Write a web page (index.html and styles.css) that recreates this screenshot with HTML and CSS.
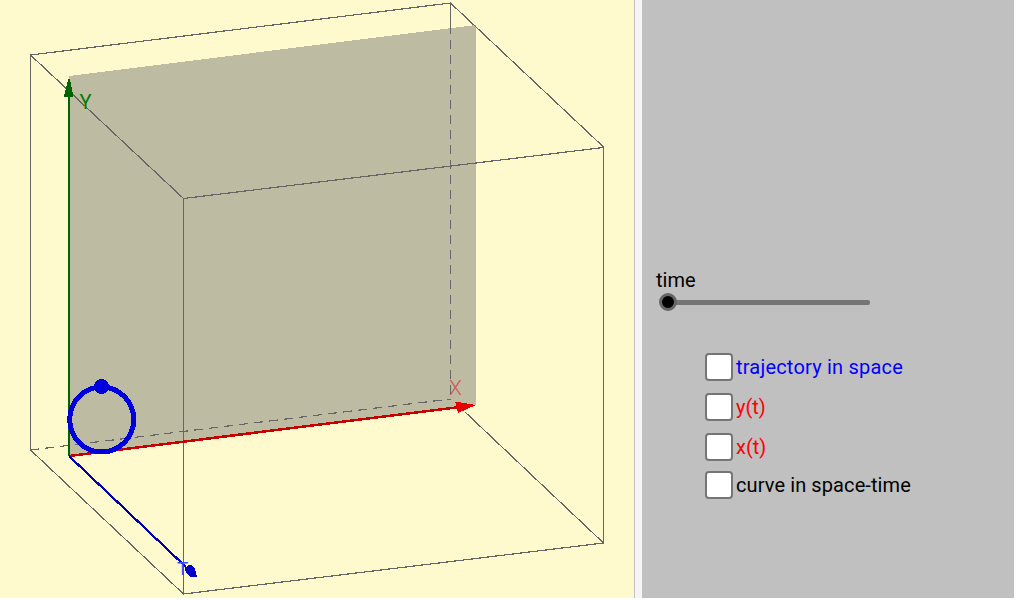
FILE: index.html
```html
<!DOCTYPE html>
<html lang="en">
<head>
<meta charset="utf-8">
<title>Trajectory</title>
<link rel="stylesheet" href="styles.css">
</head>
<body>
<div class="app">
  <div class="view">
    <svg class="scene" width="634" height="598" viewBox="0 0 634 598">
      <polygon class="plane" points="69,76 476,25 476,405 69,456"/>
      <g class="edge">
        <polyline points="450.5,25 450.5,3 30.5,55 30.5,450"/>
        <line x1="30.5" y1="55" x2="183.5" y2="198.500"/>
        <line x1="450.5" y1="3" x2="603.5" y2="147"/>
        <polygon points="183.5,198.500 603.5,147.500 603.5,543 183.5,594"/>
        <line x1="30.5" y1="450" x2="183.5" y2="594"/>
        <line x1="465" y1="412" x2="603.5" y2="543"/>
      </g>
      <g class="edge dashed">
        <line x1="450.5" y1="25" x2="450.5" y2="399"/>
        <line x1="30.5" y1="450" x2="450.5" y2="399"/>
      </g>
      <line class="axis-x" x1="69" y1="456" x2="460" y2="407"/>
      <polygon class="fill-x" points="455,401.500 476,405 458,413"/>
      <text class="label label-x" x="449" y="395">X</text>
      <line class="axis-y" x1="69" y1="456" x2="69" y2="92"/>
      <polygon class="fill-y" points="69,77 71,84 73.500,96.500 64,96.500 67,84"/>
      <text class="label label-y" x="79.500" y="109">Y</text>
      <line class="axis-t" x1="69" y1="456" x2="186" y2="567"/>
      <polygon class="fill-t" points="197,577 190,577 186,573 185,568 188,565 192,565 195,569"/>
      <text class="label label-t" x="177" y="575">T</text>
      <ellipse class="orbit" cx="101.700" cy="419.500" rx="32" ry="32.500"/>
      <circle class="point" cx="101.500" cy="386.500" r="7.500"/>
    </svg>
  </div>
  <div class="splitter"></div>
  <div class="panel">
    <div class="slider-block">
      <div class="slider-label">time</div>
      <div class="slider">
        <span class="track"></span>
        <span class="thumb"></span>
      </div>
    </div>
    <div class="options">
      <label class="option row-a"><span class="box"></span><span class="blue">trajectory in space</span></label>
      <label class="option row-b"><span class="box"></span><span class="red">y(t)</span></label>
      <label class="option row-c"><span class="box"></span><span class="red">x(t)</span></label>
      <label class="option row-d"><span class="box"></span><span class="dark">curve in space-time</span></label>
    </div>
  </div>
</div>
</body>
</html>
```
FILE: styles.css
```css
html, body {
  margin: 0;
  padding: 0;
  background: #fff;
}
.app {
  display: flex;
  width: 1014px;
  height: 598px;
  overflow: hidden;
  font-family: Roboto, "Liberation Sans", sans-serif;
  font-size: 20px;
}
.view {
  width: 634px;
  height: 598px;
  background: #fffacd;
  flex: none;
}
.scene {
  display: block;
  shape-rendering: crispEdges;
}
.plane {
  fill: #bebba3;
}
.edge line, .edge polyline, .edge polygon {
  fill: none;
  stroke: #666;
  stroke-width: 1.200;
}
.dashed line {
  stroke-dasharray: 9 6;
}
.axis-x {
  stroke: #c80000;
  stroke-width: 2.500;
}
.fill-x {
  fill: #e60000;
}
.axis-y {
  stroke: #006400;
  stroke-width: 2;
}
.fill-y {
  fill: #006400;
}
.axis-t {
  stroke: #0000b4;
  stroke-width: 2.200;
}
.fill-t {
  fill: #0000c8;
}
.label {
  font-family: Roboto, "Liberation Sans", sans-serif;
}
.label-x {
  fill: #cc5a5a;
  font-size: 21px;
  font-weight: 300;
}
.label-y {
  fill: #008000;
  font-size: 20px;
  font-weight: 400;
}
.label-t {
  fill: #3a4cff;
  font-size: 19px;
  font-weight: 400;
}
.orbit {
  fill: none;
  stroke: #0000dc;
  stroke-width: 5;
}
.point {
  fill: #0000dc;
}
.splitter {
  width: 7px;
  flex: none;
  background: #f5f5f5;
  border-left: 1px solid #c0c0c0;
}
.panel {
  flex: 1;
  background: #c0c0c0;
  display: flex;
  flex-direction: column;
  padding: 269px 0 0 14px;
}
.slider-label {
  font-size: 20px;
  line-height: 23px;
  color: #000;
}
.slider {
  position: relative;
  height: 20px;
  width: 216px;
}
.track {
  position: absolute;
  left: 10px;
  top: 8px;
  width: 204px;
  height: 5px;
  background: #757575;
  border-radius: 2px;
}
.thumb {
  position: absolute;
  left: 3px;
  top: 1px;
  width: 12px;
  height: 12px;
  border: 3px solid #666;
  border-radius: 50%;
  background: #000;
}
.options {
  display: flex;
  flex-direction: column;
  padding: 41px 0 0 49px;
}
.option {
  display: flex;
  align-items: center;
  gap: 3px;
  height: 28px;
  font-size: 20px;
  white-space: nowrap;
}
.row-b, .row-c {
  margin-top: 12px;
}
.row-d {
  margin-top: 10px;
}
.box {
  width: 24px;
  height: 24px;
  background: #fff;
  border: 2px solid #757575;
  border-radius: 4px;
  flex: none;
}
.blue {
  color: #0000ff;
  letter-spacing: 0.2px;
}
.red {
  color: #ff0000;
}
.dark {
  color: #000;
  letter-spacing: 0.1px;
}
```
